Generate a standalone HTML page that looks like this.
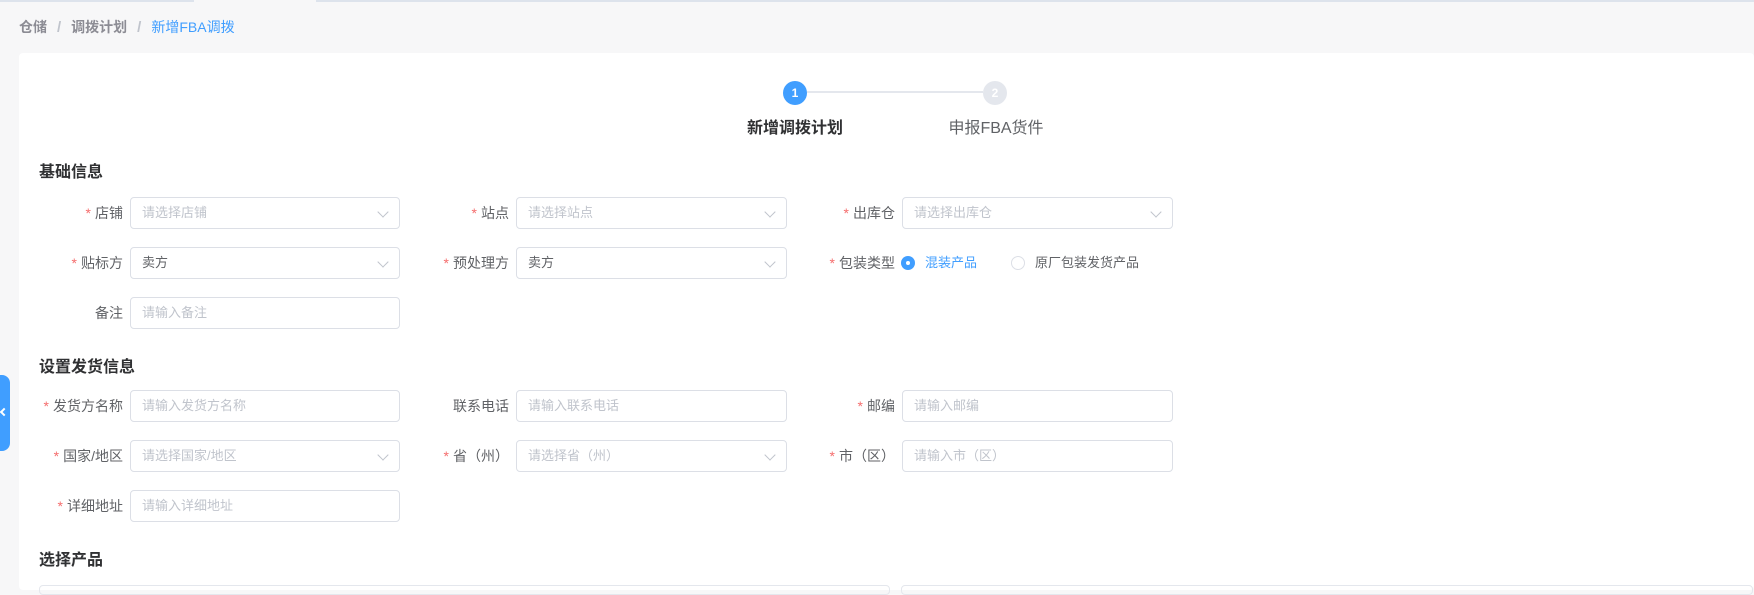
<!DOCTYPE html>
<html><head><meta charset="utf-8"><style>
*{box-sizing:border-box;margin:0;padding:0}
body{width:1754px;height:590px;overflow:hidden;background:#f7f7f8;font-family:"Liberation Sans","Noto Sans CJK SC",sans-serif;font-size:14px;color:#606266;position:relative}
.a{position:absolute}
.topl{top:0;height:2px;background:#dde3ec}
.card{left:19px;top:53px;width:1735px;height:537px;background:#fff;border-radius:4px}
.bc{left:19px;top:17px;font-size:14px;color:#8c8c94;font-weight:bold}
.bc span.s{color:#c0c4cc;margin:0 10px;font-weight:bold;font-size:15px}
.bc .c{color:#409eff;font-weight:normal}
.h{font-size:16px;font-weight:bold;color:#303133}
.in{height:32px;border:1px solid #dcdfe6;border-radius:4px;background:#fff;padding-left:11px;line-height:30px;color:#c0c4cc;font-size:13px}
.in.v{color:#606266}
.in .ar{position:absolute;right:12px;top:10px;width:8px;height:8px;border-right:1px solid #c0c4cc;border-bottom:1px solid #c0c4cc;transform:rotate(45deg)}
.lb{text-align:right;line-height:32px;font-size:14px;color:#606266}
.lb i{color:#f56c6c;font-style:normal;margin-right:4px}
</style></head><body>
<div class="a topl" style="left:0;width:194px"></div>
<div class="a topl" style="left:316px;width:1438px"></div>
<div class="a bc">仓储<span class="s">/</span>调拨计划<span class="s">/</span><span class="c">新增FBA调拨</span></div>
<div class="a card"></div>

<div class="a" style="left:807px;top:91px;width:176px;height:2px;background:#e4e7ed"></div>
<div class="a" style="left:783px;top:81px;width:24px;height:24px;border-radius:50%;background:#409eff;color:#fff;font-size:12px;font-weight:bold;text-align:center;line-height:24px">1</div>
<div class="a" style="left:983px;top:81px;width:24px;height:24px;border-radius:50%;background:#e4e7ed;color:#fff;font-size:12px;font-weight:bold;text-align:center;line-height:24px">2</div>
<div class="a" style="left:715px;top:114px;width:160px;text-align:center;font-size:16px;font-weight:bold;color:#303133">新增调拨计划</div>
<div class="a" style="left:916px;top:114px;width:160px;text-align:center;font-size:16px;color:#606266">申报FBA货件</div>

<div class="a h" style="left:39px;top:158px">基础信息</div>
<div class="a h" style="left:39px;top:353px">设置发货信息</div>
<div class="a h" style="left:39px;top:546px">选择产品</div>

<div class="a lb" style="left:20px;top:197px;width:103px"><i>*</i>店铺</div>
<div class="a in" style="left:130px;top:197px;width:270px">请选择店铺<span class="ar"></span></div>
<div class="a lb" style="left:400px;top:197px;width:109px"><i>*</i>站点</div>
<div class="a in" style="left:516px;top:197px;width:271px">请选择站点<span class="ar"></span></div>
<div class="a lb" style="left:790px;top:197px;width:105px"><i>*</i>出库仓</div>
<div class="a in" style="left:902px;top:197px;width:271px">请选择出库仓<span class="ar"></span></div>

<div class="a lb" style="left:20px;top:247px;width:103px"><i>*</i>贴标方</div>
<div class="a in v" style="left:130px;top:247px;width:270px">卖方<span class="ar"></span></div>
<div class="a lb" style="left:400px;top:247px;width:109px"><i>*</i>预处理方</div>
<div class="a in v" style="left:516px;top:247px;width:271px">卖方<span class="ar"></span></div>
<div class="a lb" style="left:790px;top:247px;width:105px"><i>*</i>包装类型</div>
<div class="a" style="left:901px;top:256px;width:14px;height:14px;border-radius:50%;background:#409eff"><div style="margin:5px;width:4px;height:4px;border-radius:50%;background:#fff"></div></div>
<div class="a" style="left:925px;top:247px;line-height:32px;color:#409eff;font-size:13px">混装产品</div>
<div class="a" style="left:1011px;top:256px;width:14px;height:14px;border-radius:50%;border:1px solid #dcdfe6"></div>
<div class="a" style="left:1035px;top:247px;line-height:32px;color:#606266;font-size:13px">原厂包装发货产品</div>

<div class="a lb" style="left:20px;top:297px;width:103px">备注</div>
<div class="a in" style="left:130px;top:297px;width:270px">请输入备注</div>

<div class="a lb" style="left:20px;top:390px;width:103px"><i>*</i>发货方名称</div>
<div class="a in" style="left:130px;top:390px;width:270px">请输入发货方名称</div>
<div class="a lb" style="left:400px;top:390px;width:109px">联系电话</div>
<div class="a in" style="left:516px;top:390px;width:271px">请输入联系电话</div>
<div class="a lb" style="left:790px;top:390px;width:105px"><i>*</i>邮编</div>
<div class="a in" style="left:902px;top:390px;width:271px">请输入邮编</div>

<div class="a lb" style="left:20px;top:440px;width:103px"><i>*</i>国家/地区</div>
<div class="a in" style="left:130px;top:440px;width:270px">请选择国家/地区<span class="ar"></span></div>
<div class="a lb" style="left:400px;top:440px;width:109px"><i>*</i>省（州）</div>
<div class="a in" style="left:516px;top:440px;width:271px">请选择省（州）<span class="ar"></span></div>
<div class="a lb" style="left:790px;top:440px;width:105px"><i>*</i>市（区）</div>
<div class="a in" style="left:902px;top:440px;width:271px">请输入市（区）</div>

<div class="a lb" style="left:20px;top:490px;width:103px"><i>*</i>详细地址</div>
<div class="a in" style="left:130px;top:490px;width:270px">请输入详细地址</div>

<div class="a" style="left:39px;top:585px;width:851px;height:10px;border:1px solid #e4e7ed;border-radius:4px"></div>
<div class="a" style="left:901px;top:585px;width:852px;height:10px;border:1px solid #e4e7ed;border-radius:4px"></div>

<div class="a" style="left:0;top:375px;width:10px;height:76px;background:#409eff;border-radius:0 8px 8px 0"></div>
<div class="a" style="left:1px;top:409px;width:6px;height:6px;border-left:2px solid #fff;border-bottom:2px solid #fff;transform:rotate(45deg)"></div>
</body></html>
